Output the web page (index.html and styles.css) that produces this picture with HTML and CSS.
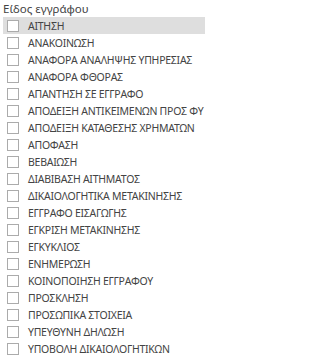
FILE: index.html
```html
<!DOCTYPE html>
<html lang="el">
<head>
<meta charset="utf-8">
<link rel="stylesheet" href="styles.css">
</head>
<body>
<div class="panel">
  <div class="title">Είδος εγγράφου</div>
  <ul class="list">
    <li class="row selected"><span class="box"></span><span class="label">ΑΙΤΗΣΗ</span></li>
    <li class="row"><span class="box"></span><span class="label">ΑΝΑΚΟΙΝΩΣΗ</span></li>
    <li class="row"><span class="box"></span><span class="label">ΑΝΑΦΟΡΑ ΑΝΑΛΗΨΗΣ ΥΠΗΡΕΣΙΑΣ</span></li>
    <li class="row"><span class="box"></span><span class="label">ΑΝΑΦΟΡΑ ΦΘΟΡΑΣ</span></li>
    <li class="row"><span class="box"></span><span class="label">ΑΠΑΝΤΗΣΗ ΣΕ ΕΓΓΡΑΦΟ</span></li>
    <li class="row"><span class="box"></span><span class="label">ΑΠΟΔΕΙΞΗ ΑΝΤΙΚΕΙΜΕΝΩΝ ΠΡΟΣ ΦΥ</span></li>
    <li class="row"><span class="box"></span><span class="label">ΑΠΟΔΕΙΞΗ ΚΑΤΑΘΕΣΗΣ ΧΡΗΜΑΤΩΝ</span></li>
    <li class="row"><span class="box"></span><span class="label">ΑΠΟΦΑΣΗ</span></li>
    <li class="row"><span class="box"></span><span class="label">ΒΕΒΑΙΩΣΗ</span></li>
    <li class="row"><span class="box"></span><span class="label">ΔΙΑΒΙΒΑΣΗ ΑΙΤΗΜΑΤΟΣ</span></li>
    <li class="row"><span class="box"></span><span class="label">ΔΙΚΑΙΟΛΟΓΗΤΙΚΑ ΜΕΤΑΚΙΝΗΣΗΣ</span></li>
    <li class="row"><span class="box"></span><span class="label">ΕΓΓΡΑΦΟ ΕΙΣΑΓΩΓΗΣ</span></li>
    <li class="row"><span class="box"></span><span class="label">ΕΓΚΡΙΣΗ ΜΕΤΑΚΙΝΗΣΗΣ</span></li>
    <li class="row"><span class="box"></span><span class="label">ΕΓΚΥΚΛΙΟΣ</span></li>
    <li class="row"><span class="box"></span><span class="label">ΕΝΗΜΕΡΩΣΗ</span></li>
    <li class="row"><span class="box"></span><span class="label">ΚΟΙΝΟΠΟΙΗΣΗ ΕΓΓΡΑΦΟΥ</span></li>
    <li class="row"><span class="box"></span><span class="label">ΠΡΟΣΚΛΗΣΗ</span></li>
    <li class="row"><span class="box"></span><span class="label">ΠΡΟΣΩΠΙΚΑ ΣΤΟΙΧΕΙΑ</span></li>
    <li class="row"><span class="box"></span><span class="label">ΥΠΕΥΘΥΝΗ ΔΗΛΩΣΗ</span></li>
    <li class="row"><span class="box"></span><span class="label">ΥΠΟΒΟΛΗ ΔΙΚΑΙΟΛΟΓΗΤΙΚΩΝ</span></li>
  </ul>
</div>
</body>
</html>
```

FILE: styles.css
```css
html, body {
  margin: 0;
  padding: 0;
  background: #ffffff;
}

body {
  font-family: "Noto Sans", "Open Sans", sans-serif;
  color: #444444;
  overflow: hidden;
}

.panel {
  padding-left: 3px;
  width: 202px;
}

.title {
  font-size: 11.5px;
  line-height: 17px;
  height: 17px;
  color: #444444;
  white-space: nowrap;
}

.list {
  list-style: none;
  margin: 0;
  padding: 0;
}

.row {
  display: flex;
  align-items: center;
  height: 17px;
  overflow: hidden;
  white-space: nowrap;
}

.row.selected {
  background: #dedede;
}

.box {
  flex: none;
  width: 10px;
  height: 10px;
  margin-left: 4px;
  margin-right: 9px;
  border: 1px solid #ababab;
  background: #ffffff;
}

.label {
  font-size: 10.5px;
  letter-spacing: -0.25px;
  line-height: 14px;
  color: #444444;
}
```
